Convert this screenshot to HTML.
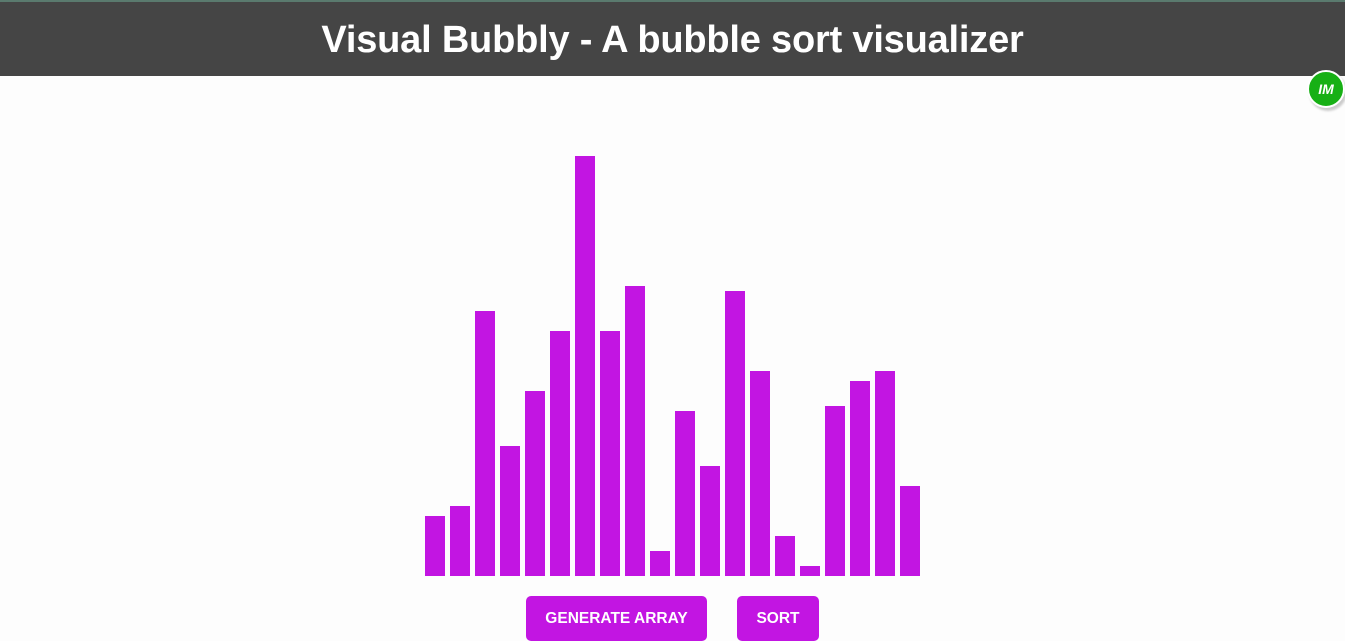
<!DOCTYPE html>
<html><head><style>
body{margin:0;width:1345px;height:635px;overflow:hidden;background:#fdfdfd;font-family:"Liberation Sans",sans-serif;position:relative}
.top{position:absolute;left:0;top:0;width:1345px;height:2px;background:#5a7a6e}
.hd{position:absolute;left:0;top:2px;width:1345px;height:74px;background:#454545;color:#fff;font-weight:bold;font-size:38px;text-align:center;line-height:76px;letter-spacing:-0.2px}
.b{position:absolute;width:20px;background:#c215e2;bottom:59px}
.btn{position:absolute;top:596px;height:45px;background:#c215e2;color:#fff;font-weight:bold;font-size:15.5px;border-radius:5px;text-align:center;line-height:45px}
.im{position:absolute;left:1307px;top:70px;width:34px;height:34px;border-radius:50%;background:#17b015;border:2px solid #fff;color:#fff;font-weight:bold;font-style:italic;font-size:14px;text-align:center;line-height:34px;box-shadow:2px 3px 2px #ccc}
</style></head><body>
<div class="top"></div>
<div class="hd">Visual Bubbly - A bubble sort visualizer</div>
<div class="im">IM</div>
<div class="b" style="left:425px;top:516px"></div>
<div class="b" style="left:450px;top:506px"></div>
<div class="b" style="left:475px;top:311px"></div>
<div class="b" style="left:500px;top:446px"></div>
<div class="b" style="left:525px;top:391px"></div>
<div class="b" style="left:550px;top:331px"></div>
<div class="b" style="left:575px;top:156px"></div>
<div class="b" style="left:600px;top:331px"></div>
<div class="b" style="left:625px;top:286px"></div>
<div class="b" style="left:650px;top:551px"></div>
<div class="b" style="left:675px;top:411px"></div>
<div class="b" style="left:700px;top:466px"></div>
<div class="b" style="left:725px;top:291px"></div>
<div class="b" style="left:750px;top:371px"></div>
<div class="b" style="left:775px;top:536px"></div>
<div class="b" style="left:800px;top:566px"></div>
<div class="b" style="left:825px;top:406px"></div>
<div class="b" style="left:850px;top:381px"></div>
<div class="b" style="left:875px;top:371px"></div>
<div class="b" style="left:900px;top:486px"></div>
<div class="btn" style="left:526px;width:181px">GENERATE ARRAY</div>
<div class="btn" style="left:737px;width:82px">SORT</div>
</body></html>
